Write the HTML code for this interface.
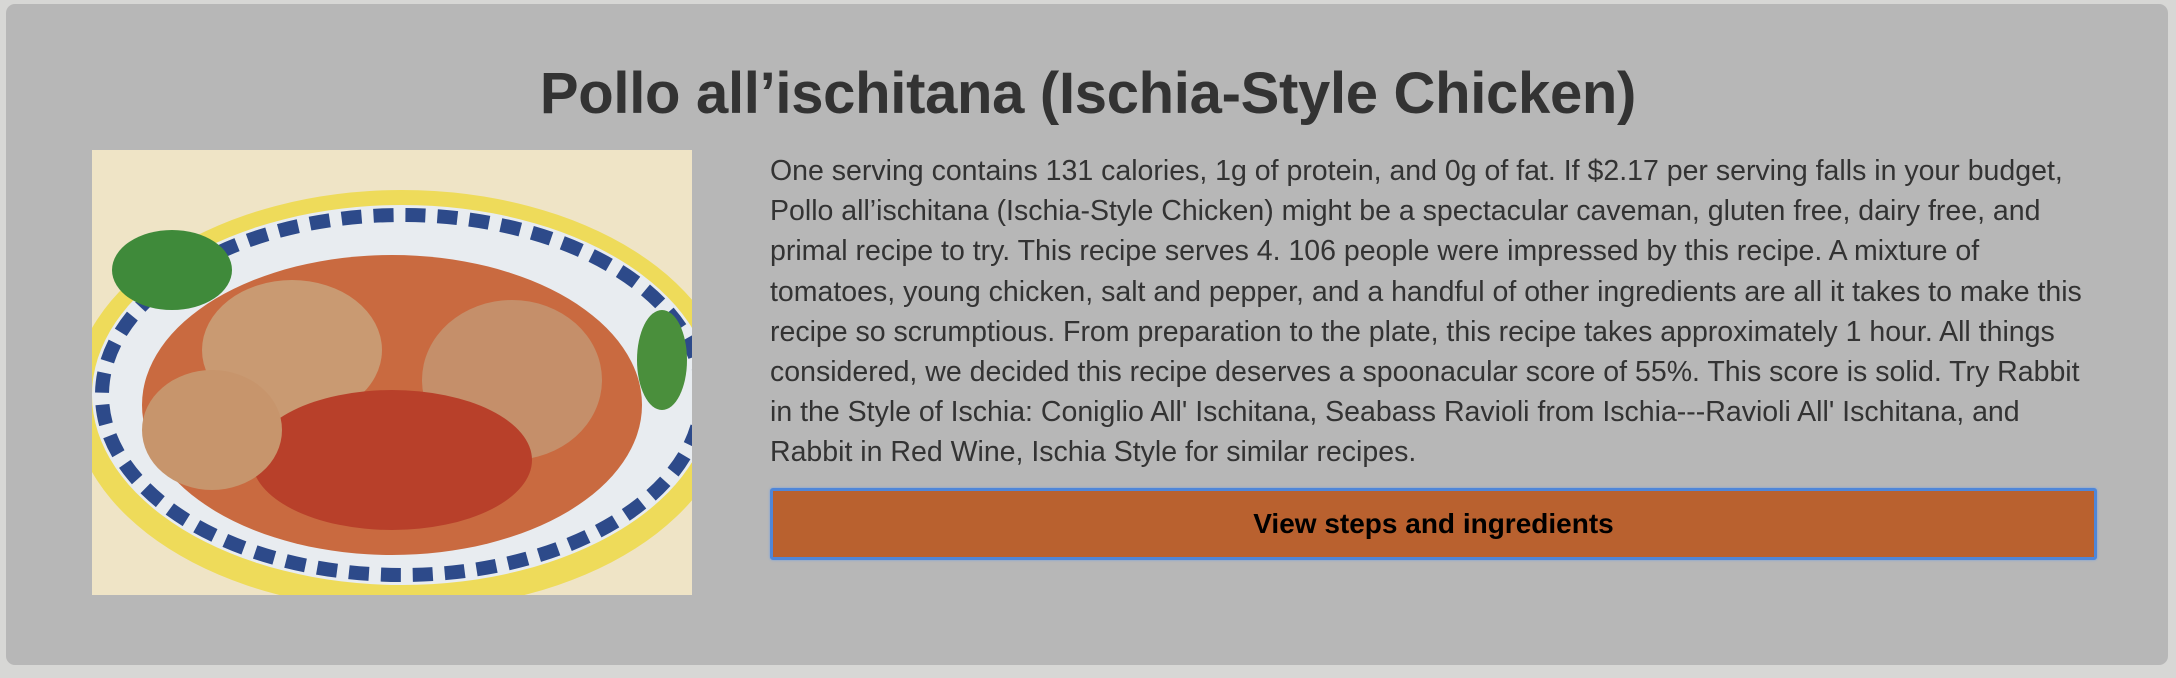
<!DOCTYPE html>
<html><head><meta charset="utf-8"><style>
html,body{margin:0;padding:0;width:2176px;height:678px;background:#d7d7d5;overflow:hidden}
.card{position:absolute;left:6px;top:4px;width:2162px;height:661px;background:#b7b7b7;border-radius:9px}
h1{position:absolute;left:0;width:2176px;top:58px;margin:0;text-align:center;font:bold 58px/72px "Liberation Sans",sans-serif;color:#333;letter-spacing:-0.3px}
.img{position:absolute;left:92px;top:150px;width:600px;height:445px;overflow:hidden;background:#efe3c2}
p{position:absolute;left:770px;top:151px;width:1330px;margin:0;font:28.5px/40.2px "Liberation Sans",sans-serif;color:#333;letter-spacing:0}
.btn{position:absolute;left:770px;top:488px;width:1321px;height:66px;background:#b9612f;border:3px solid #4f86d8;border-radius:3px;box-shadow:0 0 2px #6fa0e8;font:bold 28px/66px "Liberation Sans",sans-serif;text-align:center;color:#000}
</style></head><body>
<div class="card"></div>
<h1>Pollo all’ischitana (Ischia-Style Chicken)</h1>
<div class="img"><svg width="600" height="445" viewBox="0 0 600 445">
<rect width="600" height="445" fill="#efe4c6"/>
<ellipse cx="310" cy="250" rx="330" ry="210" fill="#eedb5a"/>
<ellipse cx="310" cy="245" rx="310" ry="190" fill="#e8ecf0"/>
<ellipse cx="310" cy="245" rx="300" ry="180" fill="none" stroke="#2d4a8a" stroke-width="14" stroke-dasharray="20 12"/>
<ellipse cx="300" cy="255" rx="250" ry="150" fill="#c96a40"/>
<ellipse cx="200" cy="200" rx="90" ry="70" fill="#c99a72"/>
<ellipse cx="420" cy="230" rx="90" ry="80" fill="#c58f6a"/>
<ellipse cx="300" cy="310" rx="140" ry="70" fill="#b8402a"/>
<ellipse cx="120" cy="280" rx="70" ry="60" fill="#c7956c"/>
<ellipse cx="80" cy="120" rx="60" ry="40" fill="#3f8a3a"/>
<ellipse cx="570" cy="210" rx="25" ry="50" fill="#4a8f3c"/>
</svg></div>
<p>One serving contains 131 calories, 1g of protein, and 0g of fat. If $2.17 per serving falls in your budget, Pollo all’ischitana (Ischia-Style Chicken) might be a spectacular caveman, gluten free, dairy free, and primal recipe to try. This recipe serves 4. 106 people were impressed by this recipe. A mixture of tomatoes, young chicken, salt and pepper, and a handful of other ingredients are all it takes to make this recipe so scrumptious. From preparation to the plate, this recipe takes approximately 1 hour. All things considered, we decided this recipe deserves a spoonacular score of 55%. This score is solid. Try Rabbit in the Style of Ischia: Coniglio All' Ischitana, Seabass Ravioli from Ischia---Ravioli All' Ischitana, and Rabbit in Red Wine, Ischia Style for similar recipes.</p>
<div class="btn">View steps and ingredients</div>
</body></html>
